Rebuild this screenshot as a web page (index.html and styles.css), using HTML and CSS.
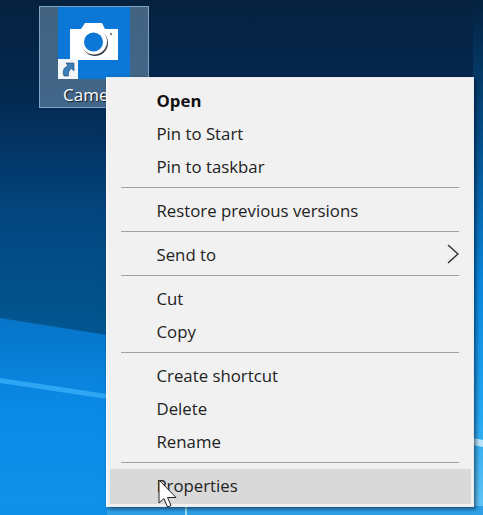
FILE: index.html
```html
<!DOCTYPE html>
<html lang="en">
<head>
<meta charset="utf-8">
<title>Camera context menu</title>
<link rel="stylesheet" href="styles.css">
</head>
<body>
<main class="desktop">
  <svg class="wallpaper" viewBox="0 0 483 515" preserveAspectRatio="none" aria-hidden="true">
    <defs>
      <linearGradient id="sky" x1="0" y1="0" x2="0" y2="1">
        <stop offset="0" stop-color="#05213f"/>
        <stop offset="0.18" stop-color="#04284f"/>
        <stop offset="0.42" stop-color="#034680"/>
        <stop offset="0.62" stop-color="#02558f"/>
      </linearGradient>
      <linearGradient id="lower" x1="0" y1="0" x2="0" y2="1">
        <stop offset="0" stop-color="#0674c8"/>
        <stop offset="0.45" stop-color="#0a8ae6"/>
        <stop offset="1" stop-color="#0f92ea"/>
      </linearGradient>
      <linearGradient id="right" x1="0" y1="0" x2="0" y2="1">
        <stop offset="0" stop-color="#04213f"/>
        <stop offset="0.25" stop-color="#044a84"/>
        <stop offset="0.55" stop-color="#0a86dc"/>
        <stop offset="0.8" stop-color="#21a6f2"/>
        <stop offset="1" stop-color="#66c6f6"/>
      </linearGradient>
    </defs>
    <rect width="483" height="515" fill="url(#sky)"/>
    <polygon points="0,318 107,335 107,515 0,515" fill="url(#lower)"/>
    <polygon points="0,378 107,394 107,399 0,383" fill="#2da6f4"/>
    <rect x="473" width="10" height="515" fill="url(#right)"/>
    <polygon points="473,438 483,440 483,447 473,445" fill="#b9e6fb"/>
    <rect y="506" width="483" height="9" fill="#2f9fe6"/>
    <rect x="0" y="506" width="107" height="9" fill="#0f90e8"/>
    <rect x="185" y="506" width="2" height="9" fill="#9adcfa"/>
  </svg>

  <div class="shortcut">
    <div class="tile">
      <svg class="camera" viewBox="0 0 48 37" aria-hidden="true">
        <path class="camera-body" d="M0 6H11L15 0H32L35 6H48V37H0Z"/>
        <circle class="camera-shadow" cx="25" cy="20" r="13"/>
        <circle class="camera-lens-cut" cx="24" cy="18.500" r="13"/>
        <circle class="camera-lens" cx="23.500" cy="19" r="9.500"/>
        <circle class="camera-dot" cx="41" cy="11" r="1.200"/>
      </svg>
      <div class="overlay">
        <svg viewBox="0 0 20 20" aria-hidden="true">
          <path class="overlay-arrow" d="M6 17C4 12 6 8 10 7L8 4H16V12L13.500 9.500C11 11 10 13.500 10.500 17Z"/>
        </svg>
      </div>
    </div>
    <span class="shortcut-label">Camera</span>
  </div>

  <nav class="menu">
    <div class="item item-default">Open</div>
    <div class="item">Pin to Start</div>
    <div class="item">Pin to taskbar</div>
    <hr class="sep">
    <div class="item">Restore previous versions</div>
    <hr class="sep">
    <div class="item item-sub">Send to
      <svg class="chevron" viewBox="0 0 12 20" aria-hidden="true"><path d="M1 1L11 10L1 19"/></svg>
    </div>
    <hr class="sep">
    <div class="item">Cut</div>
    <div class="item">Copy</div>
    <hr class="sep">
    <div class="item">Create shortcut</div>
    <div class="item">Delete</div>
    <div class="item">Rename</div>
    <hr class="sep">
    <div class="item item-hover">Properties</div>
  </nav>

  <svg class="cursor" viewBox="0 0 20 30" aria-hidden="true">
    <path d="M1 1V24L6 19.500L9.500 28L13 26.500L9.500 18.500H18Z"/>
  </svg>
</main>
</body>
</html>
```

FILE: styles.css
```css
* { box-sizing: border-box; }

html, body {
  margin: 0;
  height: 100%;
  overflow: hidden;
}

.desktop {
  position: relative;
  width: 483px;
  height: 515px;
  overflow: hidden;
  font-family: "Open Sans", "Noto Sans", "Liberation Sans", sans-serif;
}

.wallpaper {
  position: absolute;
  inset: 0;
  width: 100%;
  height: 100%;
}

.shortcut {
  position: absolute;
  left: 39px;
  top: 6px;
  width: 110px;
  height: 102px;
  display: flex;
  flex-direction: column;
  align-items: center;
  background: rgba(125, 160, 190, 0.52);
  border: 1px solid #7fa3c2;
}

.tile {
  position: relative;
  width: 72px;
  height: 72px;
  flex: none;
  background: #0b78d7;
}

.camera {
  position: absolute;
  left: 12px;
  top: 16px;
  width: 48px;
  height: 37px;
}

.camera-body { fill: #fff; }
.camera-shadow { fill: #343f4c; }
.camera-lens-cut { fill: #fff; }
.camera-lens { fill: #0b78d7; }
.camera-dot { fill: #75838f; }

.overlay {
  position: absolute;
  left: 0;
  top: 52px;
  width: 20px;
  height: 20px;
  background: #f3f6f9;
}

.overlay svg {
  display: block;
  width: 100%;
  height: 100%;
}

.overlay-arrow {
  fill: #3c7fb8;
  stroke: #1b3f63;
  stroke-width: 0.6;
}

.shortcut-label {
  margin-top: 4px;
  color: #fff;
  font-size: 17px;
  line-height: 24px;
  text-shadow: 1px 1px 1px rgba(0, 0, 0, 0.8);
}

.menu {
  position: absolute;
  left: 106px;
  top: 77px;
  width: 368px;
  height: 430px;
  padding: 5.500px 3px 0;
  background: #f1f1f1;
  border: 1px solid #e6ebef;
  border-left-color: #fdfdfd;
  box-shadow: 2px 2px 4px rgba(0, 10, 30, 0.55);
}

.item {
  position: relative;
  height: 33px;
  padding-left: 46.500px;
  font-size: 16.800px;
  line-height: 33px;
  color: #222;
  white-space: nowrap;
}

.item-default {
  font-weight: 700;
  color: #111;
}

.item-hover {
  margin-right: -1px;
  height: 35px;
  background: #d9d9d9;
}

.sep {
  height: 1px;
  margin: 4px 11px 6px;
  border: 0;
  background: #a0a0a0;
}

.chevron {
  position: absolute;
  right: 11px;
  top: 6.500px;
  width: 12px;
  height: 20px;
  fill: none;
  stroke: #333;
  stroke-width: 1.500;
}

.cursor {
  position: absolute;
  left: 158px;
  top: 479px;
  width: 20px;
  height: 30px;
  fill: #fff;
  stroke: #222;
  stroke-width: 1;
}
```
